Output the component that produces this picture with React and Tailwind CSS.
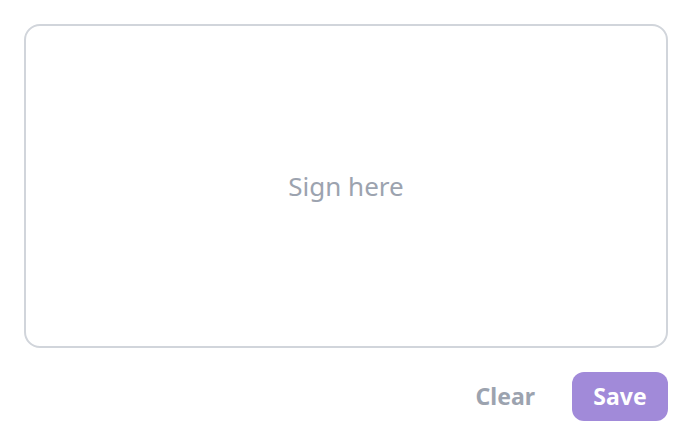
export default function App() {
  return (
    <div
      className="h-[445px] w-full bg-white p-6 flex flex-col gap-6"
      style={{ fontFamily: '"Noto Sans", "Open Sans", sans-serif' }}
    >
      {/* Signature pad */}
      <div className="flex-1 rounded-2xl border-2 border-[#d1d5db] flex items-center justify-center">
        <span className="text-[26px] text-[#9ca3af]">Sign here</span>
      </div>

      {/* Actions */}
      <div className="flex justify-end items-center gap-4">
        <button className="h-[49px] px-[21px] text-[23px] font-bold text-[#9ca3af] rounded-xl">
          Clear
        </button>
        <button className="h-[49px] w-[96px] text-[23px] font-bold text-white bg-[#a18ad9] rounded-xl">
          Save
        </button>
      </div>
    </div>
  )
}
